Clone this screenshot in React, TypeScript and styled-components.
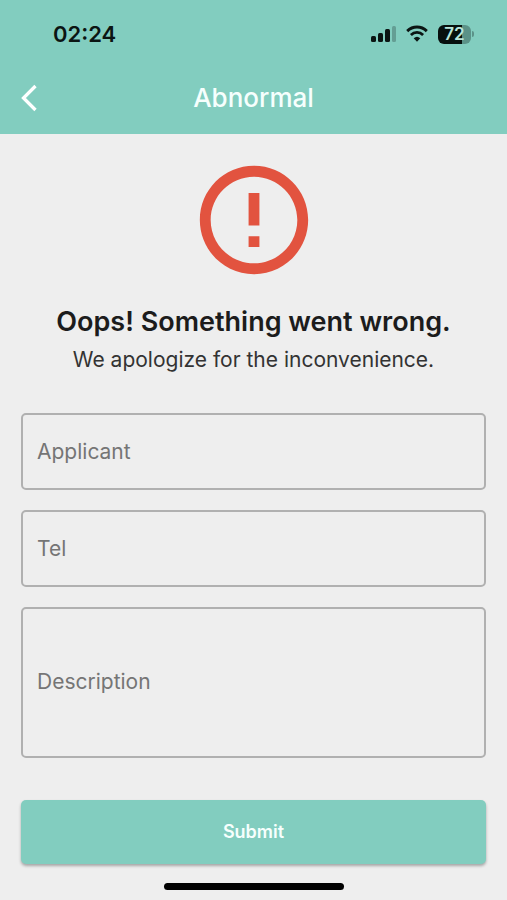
import React from "react";
import styled, { createGlobalStyle, css } from "styled-components";

const teal = "#82cdbf";

const GlobalStyle = createGlobalStyle`
  *, *::before, *::after { box-sizing: border-box; }
  body {
    margin: 0;
    background: #eeeeee;
    color: #1c1c1c;
    font-family: Inter, "Liberation Sans", sans-serif;
  }
`;

const Screen = styled.div`
  display: flex;
  flex-direction: column;
  min-height: 100vh;
`;

const Header = styled.header`
  background: ${teal};
`;

const StatusBar = styled.div`
  display: flex;
  align-items: center;
  justify-content: space-between;
  height: 62px;
  padding: 6px 33px 0 53px;
  color: #0b1513;
`;

const Clock = styled.time`
  font-size: 22px;
  line-height: 28px;
  font-weight: 600;
`;

const StatusIcons = styled.div`
  display: flex;
  align-items: center;
  gap: 10px;
`;

const NavBar = styled.nav`
  display: grid;
  grid-template-columns: 60px 1fr 60px;
  align-items: center;
  height: 72px;
`;

const BackButton = styled.button`
  display: flex;
  align-items: center;
  height: 48px;
  padding: 0 0 0 21px;
  border: 0;
  background: none;
  color: #ffffff;
  cursor: pointer;
`;

const Title = styled.h1`
  margin: 0;
  text-align: center;
  font-size: 26px;
  line-height: 32px;
  font-weight: 500;
  color: #f6fffd;
`;

const Main = styled.main`
  display: flex;
  flex: 1;
  flex-direction: column;
  padding: 21px 21px 0;
`;

const Message = styled.section`
  display: flex;
  flex-direction: column;
  align-items: center;
  text-align: center;
`;

const Heading = styled.h2`
  margin: 21px 0 0;
  font-size: 27px;
  line-height: 32px;
  font-weight: 600;
`;

const Subheading = styled.p`
  margin: 8px 0 0;
  font-size: 21px;
  line-height: 28px;
  color: #333333;
`;

const Form = styled.form`
  display: flex;
  flex-direction: column;
  gap: 20px;
  margin-top: 39px;
`;

const fieldStyle = css`
  display: block;
  width: 100%;
  border: 2px solid #b0b0b0;
  border-radius: 5px;
  background: transparent;
  font-family: inherit;
  font-size: 21px;
  line-height: 26px;
  color: #1c1c1c;
  outline-color: ${teal};

  &::placeholder {
    color: #757575;
    opacity: 1;
  }
`;

const TextField = styled.input`
  ${fieldStyle}
  height: 77px;
  padding: 0 14px;
`;

const TextArea = styled.textarea`
  ${fieldStyle}
  height: 151px;
  padding: 60px 14px;
  resize: none;
`;

const SubmitButton = styled.button`
  height: 64px;
  margin-top: 22px;
  border: 0;
  border-radius: 5px;
  background: ${teal};
  box-shadow: 0 2px 3px rgba(0, 0, 0, 0.3);
  color: #f6fffd;
  font-family: inherit;
  font-size: 18px;
  line-height: 24px;
  font-weight: 600;
  cursor: pointer;
`;

const HomeArea = styled.footer`
  display: flex;
  justify-content: center;
  padding: 16px 0 10px;
`;

const HomeIndicator = styled.div`
  width: 180px;
  height: 7px;
  border-radius: 4px;
  background: #000000;
`;

const Battery = styled.div`
  display: flex;
  align-items: center;
  gap: 1px;
`;

const BatteryBody = styled.div`
  display: flex;
  align-items: center;
  justify-content: center;
  width: 33px;
  height: 19px;
  border-radius: 6px;
  background: linear-gradient(to right, #07100e 72%, #5b9288 72%);
  color: #b9e6dc;
  font-size: 17px;
  line-height: 19px;
  font-weight: 600;
`;

const BatteryTip = styled.div`
  width: 2px;
  height: 6px;
  border-radius: 0 2px 2px 0;
  background: #5b9288;
`;

function SignalIcon() {
  return (
    <svg width="25" height="18" viewBox="0 0 25 18" fill="currentColor" aria-hidden="true">
      <rect x="0" y="11" width="5" height="6" rx="1.5" />
      <rect x="7" y="8" width="5" height="9" rx="1.5" />
      <rect x="14" y="4" width="5" height="13" rx="1.5" />
      <rect x="21" y="1" width="4" height="16" rx="1.5" opacity="0.25" />
    </svg>
  );
}

function WifiIcon() {
  return (
    <svg width="22" height="18" viewBox="0 0 22 18" fill="none" aria-hidden="true">
      <path d="M1.2 6.1C6.8 .7 15.2 .7 20.8 6.1" stroke="currentColor" strokeWidth="2.9" />
      <path d="M4.9 10C8.4 6.6 13.6 6.6 17.1 10" stroke="currentColor" strokeWidth="2.8" />
      <path d="M11 16.8L7.7 13.3Q11 10.3 14.3 13.3Z" fill="currentColor" />
    </svg>
  );
}

function BackIcon() {
  return (
    <svg width="18" height="28" viewBox="0 0 18 28" fill="none" aria-hidden="true">
      <path d="M14.5 2L2.5 14L14.5 26" stroke="currentColor" strokeWidth="3.3" />
    </svg>
  );
}

function ErrorIcon() {
  return (
    <svg width="130" height="130" viewBox="0 0 24 24" fill="#e2533f" aria-hidden="true">
      <path d="M11 15h2v2h-2zm0-8h2v6h-2zm.99-5C6.47 2 2 6.48 2 12s4.47 10 9.99 10C17.52 22 22 17.52 22 12S17.52 2 11.99 2zM12 20c-4.42 0-8-3.58-8-8s3.58-8 8-8 8 3.58 8 8-3.58 8-8 8z" />
    </svg>
  );
}

export default function App() {
  return (
    <>
      <GlobalStyle />
      <Screen>
        <Header>
          <StatusBar>
            <Clock>02:24</Clock>
            <StatusIcons>
              <SignalIcon />
              <WifiIcon />
              <Battery>
                <BatteryBody>72</BatteryBody>
                <BatteryTip />
              </Battery>
            </StatusIcons>
          </StatusBar>
          <NavBar>
            <BackButton type="button" aria-label="Back">
              <BackIcon />
            </BackButton>
            <Title>Abnormal</Title>
          </NavBar>
        </Header>
        <Main>
          <Message>
            <ErrorIcon />
            <Heading>Oops! Something went wrong.</Heading>
            <Subheading>We apologize for the inconvenience.</Subheading>
          </Message>
          <Form onSubmit={(event: React.FormEvent) => event.preventDefault()}>
            <TextField type="text" name="applicant" placeholder="Applicant" aria-label="Applicant" />
            <TextField type="tel" name="tel" placeholder="Tel" aria-label="Tel" />
            <TextArea name="description" placeholder="Description" aria-label="Description" />
            <SubmitButton type="submit">Submit</SubmitButton>
          </Form>
        </Main>
        <HomeArea>
          <HomeIndicator />
        </HomeArea>
      </Screen>
    </>
  );
}
